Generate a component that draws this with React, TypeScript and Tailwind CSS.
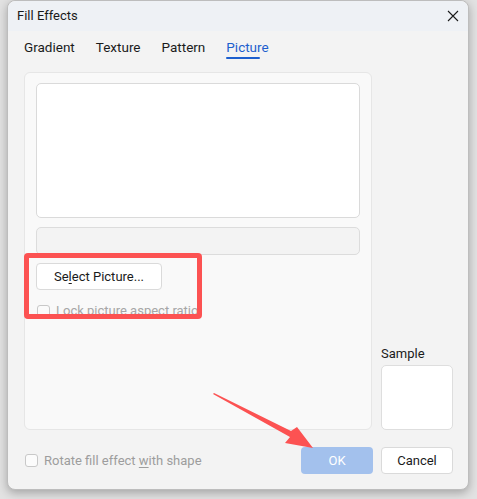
import React from "react";

const font = { fontFamily: 'Roboto, "Noto Sans", sans-serif' };

function Checkbox() {
  return <div className="h-[13px] w-[13px] shrink-0 rounded-[3px] border border-[#c8c8c8] bg-[#fbfbfb]" />;
}

export default function App() {
  const tabs = ["Gradient", "Texture", "Pattern", "Picture"];
  return (
    <div
      className="relative h-[499px] w-[477px] overflow-hidden bg-[#e2e2e2] pl-[7px]"
      style={font}
    >
      <div className="flex h-[490px] w-[462px] flex-col rounded-[8px] border border-[#bdbdbd] bg-[#f3f3f3] shadow-[0_3px_10px_rgba(0,0,0,0.28)]">
        {/* title bar */}
        <div className="flex h-[30px] shrink-0 items-center justify-between rounded-t-[8px] bg-[#eef1f5] pl-[9px] pr-[8px]">
          <span className="text-[13px] text-[#1a1a1a]">Fill Effects</span>
          <svg width="12" height="12" viewBox="0 0 12 12" className="mr-[1px]">
            <path d="M1 1 L11 11 M11 1 L1 11" stroke="#1b1b1b" strokeWidth="1.1" />
          </svg>
        </div>

        {/* tabs */}
        <div className="flex gap-[21px] pl-[16px] pt-[8px]">
          {tabs.map((t) => (
            <div key={t} className="flex flex-col">
              <span
                className={
                  "text-[13.5px] leading-[16px] " +
                  (t === "Picture" ? "text-[#1d5fce]" : "text-[#1b1b1b]")
                }
              >
                {t}
              </span>
              <div
                className={
                  "mt-[2px] h-[2px] w-[34px] rounded-full " +
                  (t === "Picture" ? "bg-[#1d5fce]" : "bg-transparent")
                }
              />
            </div>
          ))}
        </div>

        {/* content */}
        <div className="mt-[13px] flex pl-[16px]">
          <div className="flex h-[358px] w-[348px] flex-col rounded-[6px] border border-[#e6e6e6] bg-[#f9f9f9] px-[11px] pt-[10px]">
            <div className="h-[135px] rounded-[5px] border border-[#dadada] bg-white" />
            <div className="mt-[9px] h-[28px] rounded-[5px] border border-[#dcdcdc] bg-[#f3f3f3]" />
            <button className="mt-[8px] flex h-[27px] w-[126px] items-center justify-center rounded-[4px] border border-[#dadada] bg-white text-[13px] text-[#1b1b1b]">
              <span>
                Se<span className="underline underline-offset-2">l</span>ect Picture...
              </span>
            </button>
            <div className="mt-[13px] flex items-center gap-[6px] pl-[1px]">
              <Checkbox />
              <span className="text-[13px] leading-[16px] text-[#a6a6a6]">Lock picture aspect ratio</span>
            </div>
          </div>

          <div className="ml-[9px] flex w-[72px] flex-col justify-end">
            <span className="mb-[3px] text-[13px] leading-[16px] text-[#1b1b1b]">Sample</span>
            <div className="h-[65px] rounded-[5px] border border-[#dedede] bg-white" />
          </div>
        </div>

        {/* footer */}
        <div className="mt-[17px] flex h-[27px] items-center pl-[17px] pr-[15px]">
          <div className="flex items-center gap-[6px]">
            <Checkbox />
            <span className="text-[13px] text-[#9d9d9d]">
              Rotate fill effect <span className="underline underline-offset-2">w</span>ith shape
            </span>
          </div>
          <div className="ml-auto flex gap-[8px]">
            <button className="h-[27px] w-[72px] rounded-[4px] bg-[#a3c1ed] text-[13px] text-white">OK</button>
            <button className="h-[27px] w-[72px] rounded-[4px] border border-[#dadada] bg-white text-[13px] text-[#1b1b1b]">
              Cancel
            </button>
          </div>
        </div>
      </div>

      {/* annotation: highlight */}
      <div className="absolute left-[24px] top-[253px] h-[66px] w-[178px] rounded-[4px] border-[5px] border-[#fc5252]" />

      {/* annotation: arrow */}
      <svg className="absolute left-0 top-0" width="477" height="499" viewBox="0 0 477 499">
        <polygon
          points="213,394 214,393 291,431 297,427 313,448 285,443 290,437"
          fill="#fc5252"
        />
      </svg>
    </div>
  );
}
